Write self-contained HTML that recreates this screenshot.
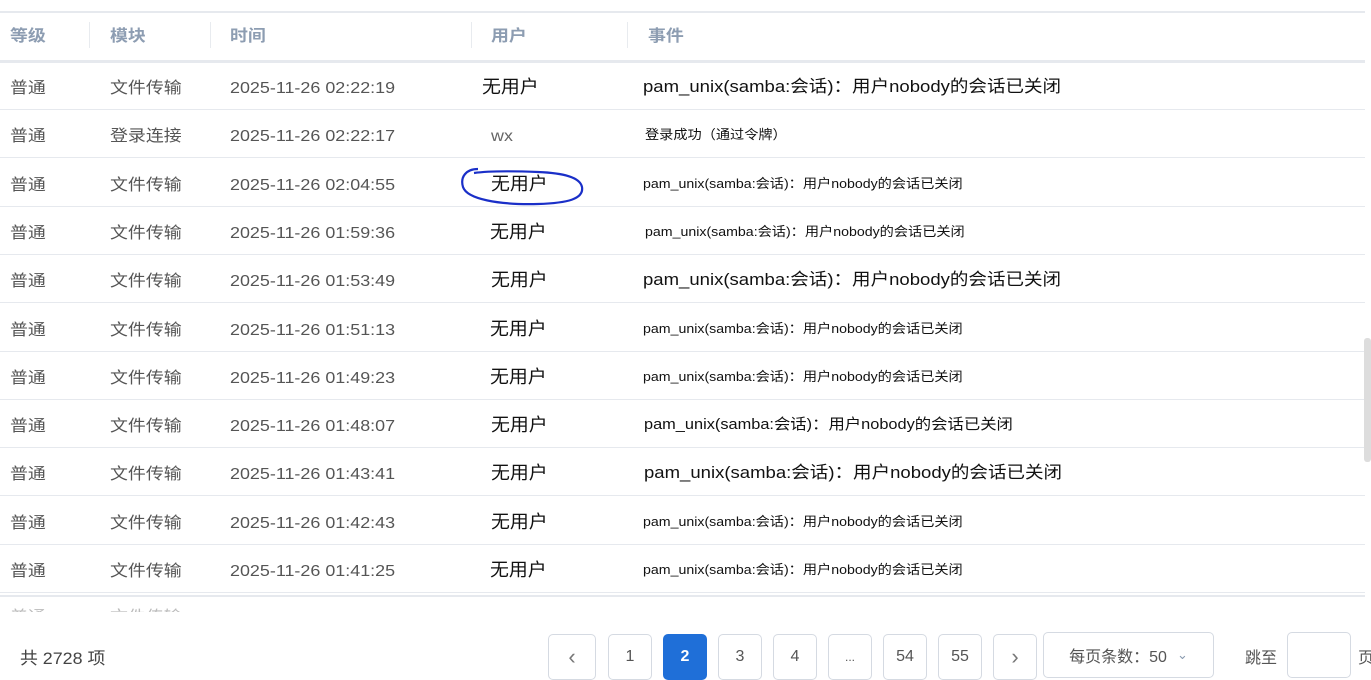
<!DOCTYPE html>
<html><head><meta charset="utf-8"><style>
*{margin:0;padding:0;box-sizing:border-box}
body{width:1371px;height:675px;overflow:hidden;background:#fff;font-family:"Liberation Sans","Noto Sans CJK SC",sans-serif;position:relative;color:#555}
.a{position:absolute;white-space:nowrap;line-height:24px;height:24px;transform-origin:left center}
.hl{position:absolute;left:0;width:1365px;height:1px;background:#e6e9ee}
.hd{font-size:16px;font-weight:bold;color:#8d9db2;top:25px;transform:scaleX(1.12)}
.sep{position:absolute;top:22px;width:1px;height:26px;background:#e8ebef}
.c{font-size:16px;color:#555;transform:scaleX(1.12)}
.u{font-size:18px;color:#111;transform:scaleX(1.05)}
.e{color:#111;transform:scaleX(1.09)}
.btn{position:absolute;top:634px;height:46px;border:1px solid #d5dae2;border-radius:5px;font-size:16px;color:#555;display:flex;align-items:center;justify-content:center;background:#fff}
</style></head><body>
<div class="hl" style="top:11px;height:2px"></div>
<div class="a hd" style="left:10px">等级</div>
<div class="a hd" style="left:110px">模块</div>
<div class="a hd" style="left:230px">时间</div>
<div class="a hd" style="left:491px">用户</div>
<div class="a hd" style="left:648px">事件</div>
<div class="sep" style="left:89px"></div><div class="sep" style="left:210px"></div><div class="sep" style="left:471px"></div><div class="sep" style="left:627px"></div>
<div class="hl" style="top:60px;height:3px"></div>

<div id="rows"></div>
<script>
var d=[
["文件传输","02:22:19","无用户",482,"pam_unix(samba:会话)：用户nobody的会话已关闭",17,643],
["登录连接","02:22:17","wx",491,"登录成功（通过令牌）",13,645],
["文件传输","02:04:55","无用户",491,"pam_unix(samba:会话)：用户nobody的会话已关闭",13,643],
["文件传输","01:59:36","无用户",490,"pam_unix(samba:会话)：用户nobody的会话已关闭",13,645],
["文件传输","01:53:49","无用户",491,"pam_unix(samba:会话)：用户nobody的会话已关闭",17,643],
["文件传输","01:51:13","无用户",490,"pam_unix(samba:会话)：用户nobody的会话已关闭",13,643],
["文件传输","01:49:23","无用户",490,"pam_unix(samba:会话)：用户nobody的会话已关闭",13,643],
["文件传输","01:48:07","无用户",491,"pam_unix(samba:会话)：用户nobody的会话已关闭",15,644],
["文件传输","01:43:41","无用户",491,"pam_unix(samba:会话)：用户nobody的会话已关闭",17,644],
["文件传输","01:42:43","无用户",491,"pam_unix(samba:会话)：用户nobody的会话已关闭",13,643],
["文件传输","01:41:25","无用户",490,"pam_unix(samba:会话)：用户nobody的会话已关闭",13,643]];
var h="";
for(var i=0;i<d.length;i++){var y=86+i*48.3;var r=d[i];var t=(y-9);
h+='<div class="a c" style="left:10px;top:'+t+'px">普通</div>';
h+='<div class="a c" style="left:110px;top:'+t+'px">'+r[0]+'</div>';
h+='<div class="a c" style="left:230px;top:'+t+'px">2025-11-26 '+r[1]+'</div>';
if(r[2]=="wx")h+='<div class="a c" style="left:'+r[3]+'px;top:'+t+'px;color:#666">wx</div>';
else h+='<div class="a u" style="left:'+r[3]+'px;top:'+(t-2)+'px">'+r[2]+'</div>';
h+='<div class="a e" style="left:'+r[6]+'px;top:'+(t-2)+'px;font-size:'+r[5]+'px">'+r[4]+'</div>';
h+='<div class="hl" style="top:'+Math.round(y+23)+'px"></div>';}
document.getElementById("rows").innerHTML=h;
</script>
<div class="a c" style="left:10px;top:606px;color:#bbb;height:6px;overflow:hidden">普通</div>
<div class="a c" style="left:110px;top:606px;color:#bbb;height:6px;overflow:hidden">文件传输</div>
<svg class="a" style="left:458px;top:163px;height:46px" width="130" height="46"><path d="M20 6 C8 6 2 14 5 24 C9 36 40 42 80 41 C110 40 126 36 124 24 C122 14 105 10 80 9 C55 8 30 8 16 10" fill="none" stroke="#1a2fc8" stroke-width="2.2"/></svg>
<div style="position:absolute;left:1364px;top:338px;width:7px;height:124px;background:#ddd;border-radius:3px"></div>
<div class="hl" style="top:595px;width:1365px;height:2px"></div>
<div class="a" style="left:20px;top:647px;font-size:17px;color:#444;transform:scaleX(1.05)">共 2728 项</div>
<div class="btn" style="left:548px;width:48px;font-size:22px;color:#777">&#8249;</div>
<div class="btn" style="left:608px;width:44px">1</div>
<div class="btn" style="left:663px;width:44px;background:#1f6fd8;border-color:#1f6fd8;color:#fff;font-weight:bold">2</div>
<div class="btn" style="left:718px;width:44px">3</div>
<div class="btn" style="left:773px;width:44px">4</div>
<div class="btn" style="left:828px;width:44px;font-size:12px">...</div>
<div class="btn" style="left:883px;width:44px">54</div>
<div class="btn" style="left:938px;width:44px">55</div>
<div class="btn" style="left:993px;width:44px;font-size:22px;color:#777">&#8250;</div>
<div class="btn" style="left:1043px;width:171px;top:632px">每页条数：50 <span style="margin-left:10px;color:#8a9bb0;font-size:13px">&#8964;</span></div>
<div class="a" style="left:1245px;top:647px;font-size:16px;color:#555">跳至</div>
<div class="btn" style="left:1287px;width:64px;top:632px"></div>
<div class="a" style="left:1358px;top:647px;font-size:16px;color:#555">页</div>
</body></html>
